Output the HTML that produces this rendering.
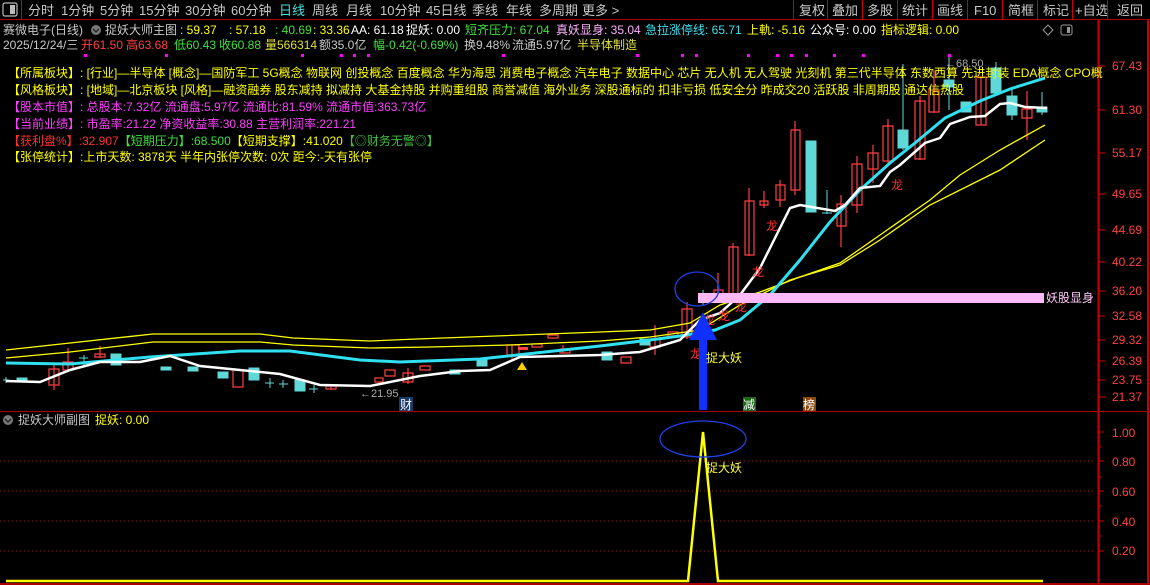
<!DOCTYPE html>
<html><head><meta charset="utf-8"><style>
body{margin:0;background:#000;width:1150px;height:585px;overflow:hidden;font-family:"Liberation Sans","Noto Sans CJK SC",sans-serif}
svg{display:block}
text{font-family:"Liberation Sans","Noto Sans CJK SC",sans-serif}
</style></head><body>
<svg width="1150" height="585" xmlns="http://www.w3.org/2000/svg">
<rect width="1150" height="585" fill="#000"/>
<line x1="0" y1="19.5" x2="1150" y2="19.5" stroke="#a00" />
<rect x="3" y="3" width="14" height="13" rx="2" fill="none" stroke="#bbb" stroke-width="1.2"/>
<rect x="10" y="5" width="5" height="9" fill="#bbb"/>
<line x1="21.5" y1="0" x2="21.5" y2="20" stroke="#c00"/>
<g font-size="13" fill="#c8c8c8">
<text x="28" y="15">分时</text><text x="61" y="15">1分钟</text><text x="100" y="15">5分钟</text><text x="139" y="15">15分钟</text><text x="185" y="15">30分钟</text><text x="231" y="15">60分钟</text>
<text x="279" y="15" fill="#40e0e0">日线</text><text x="312" y="15">周线</text><text x="346" y="15">月线</text><text x="380" y="15">10分钟</text><text x="426" y="15">45日线</text><text x="472" y="15">季线</text><text x="506" y="15">年线</text><text x="539" y="15">多周期</text><text x="582" y="15">更多 &gt;</text>
<text x="799" y="15">复权</text><text x="832" y="15">叠加</text><text x="867" y="15">多股</text><text x="902" y="15">统计</text><text x="937" y="15">画线</text><text x="974" y="15">F10</text><text x="1008" y="15">简框</text><text x="1043" y="15">标记</text><text x="1075" y="15">+自选</text><text x="1117" y="15">返回</text>
</g>
<g stroke="#c00"><line x1="793.5" y1="0" x2="793.5" y2="20"/><line x1="827.5" y1="0" x2="827.5" y2="20"/><line x1="862.5" y1="0" x2="862.5" y2="20"/><line x1="897.5" y1="0" x2="897.5" y2="20"/><line x1="932.5" y1="0" x2="932.5" y2="20"/><line x1="967.5" y1="0" x2="967.5" y2="20"/><line x1="1002.5" y1="0" x2="1002.5" y2="20"/><line x1="1037.5" y1="0" x2="1037.5" y2="20"/><line x1="1072.5" y1="0" x2="1072.5" y2="20"/><line x1="1107.5" y1="0" x2="1107.5" y2="20"/></g>
<line x1="1098.5" y1="20" x2="1098.5" y2="585" stroke="#c00" stroke-width="2"/>
<line x1="1148" y1="20" x2="1148" y2="585" stroke="#c00" stroke-width="2"/>
<line x1="0" y1="411.5" x2="1150" y2="411.5" stroke="#a00"/>
<line x1="0" y1="584" x2="1150" y2="584" stroke="#a00" stroke-width="2"/>
<g font-size="12">
<text x="3" y="34" fill="#c8c8c8">赛微电子(日线)</text>
<circle cx="96" cy="30" r="5" fill="#777"/><path d="M93 29l3 3 3-3" stroke="#222" stroke-width="1.3" fill="none"/>
<text x="105" y="34" fill="#c8c8c8">捉妖大师主图</text>
<text x="180" y="34" fill="#ffff00">: 59.37</text><text x="229" y="34" fill="#ffff00">: 57.18</text><text x="275" y="34" fill="#40e040">: 40.69</text><text x="313" y="34" fill="#ffff00">: 33.36</text>
<text x="351" y="34" fill="#fff">AA: 61.18</text><text x="406" y="34" fill="#fff">捉妖: 0.00</text><text x="465" y="34" fill="#40e040">短齐压力: 67.04</text><text x="556" y="34" fill="#ffb0ff">真妖显身: 35.04</text><text x="645" y="34" fill="#40e0f0">急拉涨停线: 65.71</text><text x="747" y="34" fill="#ffff00">上軌: -5.16</text><text x="810" y="34" fill="#fff">公众号: 0.00</text><text x="881" y="34" fill="#ffff00">指标逻辑: 0.00</text>
<text x="3" y="49" fill="#c8c8c8">2025/12/24/三</text><text x="81" y="49" fill="#ff4040">开61.50</text><text x="126" y="49" fill="#ff4040">高63.68</text><text x="174" y="49" fill="#40e040">低60.43</text><text x="219" y="49" fill="#40e040">收60.88</text><text x="265" y="49" fill="#e0e040">量566314</text><text x="319" y="49" fill="#c8c8c8">额35.0亿</text><text x="373" y="49" fill="#40e040">幅-0.42(-0.69%)</text><text x="464" y="49" fill="#c8c8c8">换9.48%</text><text x="512" y="49" fill="#c8c8c8">流通5.97亿</text><text x="577" y="49" fill="#e0e040">半导体制造</text>
</g>
<path d="M1043 30l5-5 5 5-5 5z" stroke="#999" fill="none"/><rect x="1061" y="25" width="11" height="10" rx="2" stroke="#999" fill="none"/><rect x="1067" y="27" width="3" height="6" fill="#999"/>
<g fill="#ff00ff"><rect x="84" y="54" width="3" height="3"/><rect x="165" y="54" width="3" height="3"/><rect x="301" y="54" width="3" height="3"/><rect x="340" y="54" width="3" height="3"/><rect x="353" y="54" width="3" height="3"/><rect x="367" y="54" width="3" height="3"/><rect x="502" y="54" width="3" height="3"/><rect x="636" y="54" width="3" height="3"/><rect x="681" y="54" width="3" height="3"/><rect x="695" y="54" width="3" height="3"/><rect x="747" y="54" width="3" height="3"/><rect x="776" y="54" width="3" height="3"/><rect x="790" y="54" width="3" height="3"/><rect x="805" y="54" width="3" height="3"/><rect x="833" y="54" width="3" height="3"/><rect x="862" y="54" width="3" height="3"/><rect x="948" y="54" width="3" height="3"/></g>
<g fill="none" stroke="#ff4040" stroke-width="1.2">
<path d="M54 365v25M49 369h10v16h-10z"/><path d="M68 348v22M63 362h10v8h-10z"/><path d="M100 346v12M95 354h10v3h-10z"/>
<path d="M233 370h10v17h-10z"/><path d="M331 384v6M326 386h10v3h-10z"/><path d="M385 370h10v6h-10z"/><path d="M408 368v16M403 373h10v9h-10z"/><path d="M420 366h10v4h-10z"/><path d="M375 378h8v4h-8z"/>
<path d="M512 345v16M507 345h12v10h-12z"/><path d="M532 344h10v3h-10z"/><path d="M548 335h10v3h-10z"/><path d="M563 345v8M560 349h10v4h-10z"/><path d="M621 357h10v6h-10z"/><path d="M655 325v30M650 339h10v8h-10z"/><path d="M668 332h10v4h-10z"/>
<path d="M687 302v37M682 309h10v28h-10z"/><path d="M718 273v28M714 290h9v10h-9z"/><path d="M733 243v60M729 247h9v53h-9z"/><path d="M749 188v68M745 201h9v54h-9z"/>
<path d="M764 191v17M760 201h8v4h-8z"/><path d="M780 180v27M776 185h9v15h-9z"/><path d="M795 121v74M791 130h9v60h-9z"/><path d="M841 195v52M837 204h9v22h-9z"/><path d="M857 156v57M852 164h10v41h-10z"/><path d="M873 145v38M868 153h10v16h-10z"/><path d="M888 119v44M883 126h10v35h-10z"/><path d="M920 96v64M915 101h10v58h-10z"/><path d="M934 70v43M929 90h10v22h-10z"/><path d="M981 77v48M976 77h10v48h-10z"/><path d="M1027 91v49M1022 109h10v9h-10z"/>
</g>
<rect x="518" y="347" width="10" height="3" fill="#ff4040"/>
<g fill="#60d8d8" stroke="#60d8d8" stroke-width="1">
<path d="M6 377v6M3 380h6" fill="none"/><rect x="17" y="378" width="10" height="4"/><rect x="111" y="354" width="10" height="11"/><rect x="161" y="367" width="10" height="3"/><path d="M84 355v10M79 358h9" fill="none"/><rect x="188" y="367" width="10" height="4"/><rect x="218" y="372" width="10" height="6"/><rect x="249" y="368" width="10" height="12"/><rect x="295" y="380" width="10" height="11"/><path d="M270 378v10M265 383h9M283 380v8M279 384h9M314 385v8M309 389h9" fill="none"/>
<rect x="450" y="370" width="10" height="4"/><rect x="477" y="360" width="10" height="6"/><rect x="602" y="352" width="10" height="8"/><rect x="640" y="339" width="10" height="6"/>
<path d="M703 290v15M699 300h8" fill="none"/><rect x="806" y="141" width="10" height="71"/><path d="M827 190v24M822 213h10" fill="none"/><rect x="898" y="130" width="10" height="18"/><path d="M903 64v86" fill="none"/><rect x="944" y="80" width="10" height="7"/><path d="M949 57v53" fill="none"/><rect x="961" y="102" width="10" height="10"/><rect x="991" y="68" width="10" height="25"/><path d="M996 62v32" fill="none"/><rect x="1007" y="96" width="10" height="19"/><path d="M1012 87v33" fill="none"/><rect x="1037" y="107" width="10" height="5"/><path d="M1042 92v23" fill="none"/>
</g>
<polyline fill="none" stroke="#ffff00" stroke-width="1.3" points="6,350 70,343 153,334 260,334 293,338 370,341 417,339 600,332 650,330 690,323 720,305 760,292 800,277 840,263 880,235 930,200 960,175 1000,150 1045,125"/>
<polyline fill="none" stroke="#ffff00" stroke-width="1.3" points="6,358 70,352 153,342 260,342 293,345 370,348 430,347 510,345 600,341 650,337 700,330 740,305 790,280 840,265 880,240 930,205 1000,170 1045,140"/>
<polyline fill="none" stroke="#30e0f0" stroke-width="3" points="6,363 70,364 150,357 240,351 290,351 360,360 400,362 480,359 600,346 650,340 680,336 715,330 740,320 770,295 800,260 830,222 860,190 890,163 915,143 945,118 980,101 1010,89 1045,78"/>
<polyline fill="none" stroke="#fff" stroke-width="2.5" points="6,381 40,382 70,370 100,362 140,362 170,356 200,366 280,374 320,385 370,386 420,376 460,371 490,370 520,357 560,356 600,355 640,352 680,340 700,320 720,313 740,295 760,268 775,238 790,208 800,205 835,211 845,205 860,188 880,186 890,172 900,165 925,143 940,138 950,124 970,117 985,116 1000,104 1010,103 1025,107 1047,108"/>
<g fill="#ff3030" font-size="12"><text x="766" y="230">龙</text><text x="752" y="276">龙</text><text x="735" y="311">龙</text><text x="718" y="320">龙</text><text x="703" y="324">龙</text><text x="891" y="189">龙</text><text x="690" y="358">龙</text></g>
<text x="945" y="67" fill="#aaa" font-size="11">←68.50</text>
<text x="360" y="397" fill="#aaa" font-size="11">←21.95</text>
<rect x="399" y="397" width="14" height="14" fill="#1a3a6a"/><text x="400" y="409" fill="#fff" font-size="12">财</text>
<rect x="743" y="397" width="13" height="14" fill="#1a6a1a"/><text x="743" y="409" fill="#fff" font-size="12">减</text>
<rect x="803" y="397" width="13" height="14" fill="#8a4a10"/><text x="803" y="409" fill="#fff" font-size="12">榜</text>
<path d="M517 370l5-8 5 8z" fill="#ffd000"/>
<rect x="698" y="293" width="346" height="10" fill="#ffb8f8"/>
<text x="1046" y="302" fill="#ffc8f8" font-size="12">妖股显身</text>
<ellipse cx="697" cy="289" rx="22" ry="17" fill="none" stroke="#2040e0" stroke-width="1.3"/>
<path d="M703 312l-14 28h10v70h8v-70h10z" fill="#1030ff"/>
<text x="706" y="362" fill="#ffff40" font-size="12">捉大妖</text>
<g font-size="12">
<text x="8" y="77" fill="#ffff00">【所属板块】: [行业]—半导体 [概念]—国防军工 5G概念 物联网 创投概念 百度概念 华为海思 消费电子概念 汽车电子 数据中心 芯片 无人机 无人驾驶 光刻机 第三代半导体 东数西算 先进封装 EDA概念 CPO概</text>
<text x="8" y="94" fill="#ffff00">【风格板块】: [地域]—北京板块 [风格]—融资融券 股东减持 拟减持 大基金持股 并购重组股 商誉减值 海外业务 深股通标的 扣非亏损 低安全分 昨成交20 活跃股 非周期股 通达信热股</text>
<text x="8" y="111" fill="#ff40ff">【股本市值】: 总股本:7.32亿 流通盘:5.97亿 流通比:81.59% 流通市值:363.73亿</text>
<text x="8" y="128" fill="#ff40ff">【当前业绩】: 市盈率:21.22 净资收益率:30.88 主营利润率:221.21</text>
<text x="8" y="145" fill="#ff3030">【获利盘%】:32.907<tspan fill="#40e040">【短期压力】:68.500</tspan><tspan fill="#ffff00">【短期支撑】:41.020</tspan><tspan fill="#40c040">【◎财务无警◎】</tspan></text>
<text x="8" y="161" fill="#ffff00">【张停统计】:上市天数: 3878天 半年内张停次数: 0次 距今:-天有张停</text>
</g>
<g fill="#ff4040" font-size="12">
<text x="1112" y="70">67.43</text><text x="1112" y="114">61.30</text><text x="1112" y="157">55.17</text><text x="1112" y="198">49.65</text><text x="1112" y="234">44.69</text><text x="1112" y="266">40.22</text><text x="1112" y="295">36.20</text><text x="1112" y="320">32.58</text><text x="1112" y="344">29.32</text><text x="1112" y="365">26.39</text><text x="1112" y="384">23.75</text><text x="1112" y="401">21.37</text>
<text x="1112" y="437">1.00</text><text x="1112" y="466">0.80</text><text x="1112" y="496">0.60</text><text x="1112" y="526">0.40</text><text x="1112" y="555">0.20</text>
</g>
<g stroke="#c00"><path d="M1099 66h6M1099 110h6M1099 153h6M1099 194h6M1099 230h6M1099 262h6M1099 291h6M1099 316h6M1099 340h6M1099 361h6M1099 380h6M1099 397h6M1099 432h5M1099 461h5M1099 491h5M1099 521h5M1099 551h5M1099 447h3M1099 477h3M1099 506h3M1099 536h3"/></g>
<g stroke="#902020" stroke-dasharray="1,3"><path d="M0 461h1094M0 491h1094M0 521h1094M0 551h1094"/></g>
<circle cx="8" cy="420" r="5" fill="#777"/><path d="M5 419l3 3 3-3" stroke="#222" stroke-width="1.3" fill="none"/>
<text x="18" y="424" fill="#c8c8c8" font-size="12">捉妖大师副图</text><text x="95" y="424" fill="#ffff00" font-size="12">捉妖: 0.00</text>
<polyline fill="none" stroke="#ffff00" stroke-width="2.5" points="6,581 688,581 703,432 718,581 1043,581"/>
<ellipse cx="703" cy="439" rx="43" ry="18" fill="none" stroke="#2040e0" stroke-width="1.3"/>
<text x="706" y="472" fill="#ffff40" font-size="12">捉大妖</text>
</svg>
</body></html>
